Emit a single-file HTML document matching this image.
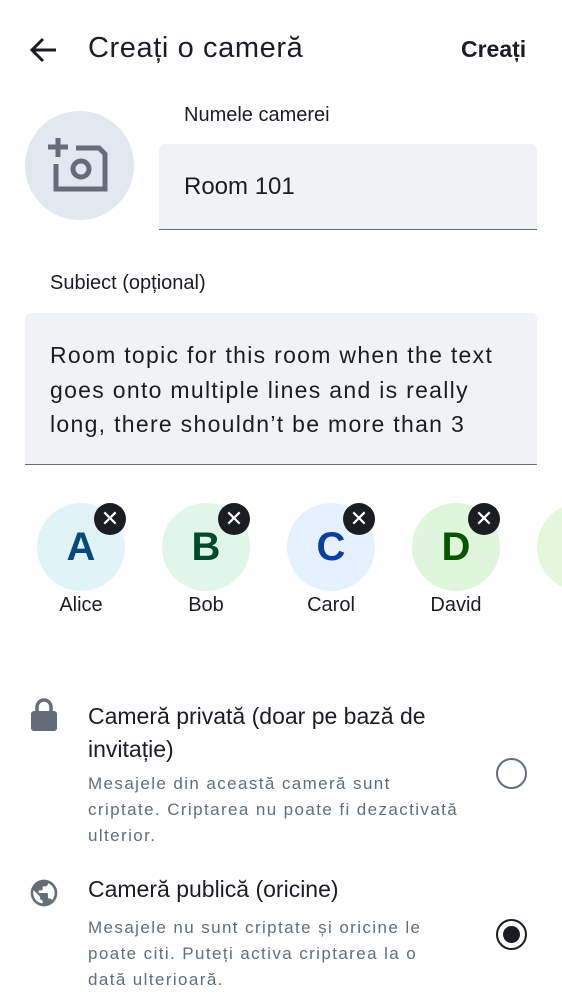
<!DOCTYPE html>
<html><head><meta charset="utf-8"><style>
*{margin:0;padding:0;box-sizing:border-box}
body{width:562px;height:1000px;background:#fff;font-family:"Liberation Sans",sans-serif;color:#1b1d22;position:relative;overflow:hidden}
.a{position:absolute}
.av{position:absolute;top:503px;width:88px;height:88px;border-radius:50%;font-weight:bold;font-size:40px;text-align:center;line-height:88px}
.x{position:absolute;top:503px;width:32px;height:32px;border-radius:50%;background:#1b1d22;color:#fff;text-align:center;line-height:32px;font-size:22px}
.nm{position:absolute;top:594px;width:120px;text-align:center;font-size:20px}
.d{position:absolute;left:88px;font-size:17px;line-height:26px;color:#656d77;letter-spacing:1.4px;white-space:nowrap}
</style></head><body>
<svg class="a" style="left:28px;top:36px" width="30" height="28" viewBox="0 0 30 28"><path d="M28 14H4M15 3L4 14l11 11" stroke="#1b1d22" stroke-width="3" fill="none"/></svg>
<div class="a" style="left:88px;top:32px;font-size:29px;letter-spacing:0.6px">Creați o cameră</div>
<div class="a" style="left:461px;top:36px;font-size:23px;font-weight:bold">Creați</div>
<div class="a" style="left:25px;top:111px;width:109px;height:109px;border-radius:50%;background:#e3e7ef"></div>
<svg class="a" style="left:46px;top:138px" width="62" height="56" viewBox="0 0 62 56"><g fill="none" stroke="#656d77" stroke-width="5"><path d="M12 0v19M2 9h20"/><path d="M10 26v25h49V16l-6-6H30"/><circle cx="35" cy="31" r="8"/></g></svg>
<div class="a" style="left:184px;top:104px;font-size:20px">Numele camerei</div>
<div class="a" style="left:159px;top:144px;width:378px;height:86px;background:#f0f2f5;border-radius:6px 6px 0 0;border-bottom:1.5px solid #656d77"></div>
<div class="a" style="left:184px;top:173px;font-size:24px">Room 101</div>
<div class="a" style="left:50px;top:272px;font-size:20px">Subiect (opțional)</div>
<div class="a" style="left:25px;top:313px;width:512px;height:152px;background:#f0f2f5;border-radius:6px 6px 0 0;border-bottom:1.5px solid #656d77"></div>
<div class="a" style="left:50px;top:338px;font-size:23px;line-height:34.5px;letter-spacing:1.3px;white-space:nowrap">Room topic for this room when the text<br>goes onto multiple lines and is really<br>long, there shouldn’t be more than 3</div>
<div class="av" style="left:37px;background:#e0f4f8;color:#0a4a7a">A</div>
<div class="av" style="left:162px;background:#e0f6eb;color:#004a2a">B</div>
<div class="av" style="left:287px;background:#e6f1ff;color:#0a3ea0">C</div>
<div class="av" style="left:412px;background:#e0f6dc;color:#085500">D</div>
<div class="av" style="left:537px;background:#e4f6dc"></div>
<div class="x" style="left:94px">✕</div>
<div class="x" style="left:218px">✕</div>
<div class="x" style="left:343px">✕</div>
<div class="x" style="left:468px">✕</div>
<div class="nm" style="left:21px">Alice</div>
<div class="nm" style="left:146px">Bob</div>
<div class="nm" style="left:271px">Carol</div>
<div class="nm" style="left:396px">David</div>
<svg class="a" style="left:30px;top:698px" width="28" height="34" viewBox="0 0 28 34"><path d="M7 13V9a7 7 0 0 1 14 0v4" stroke="#656d77" stroke-width="3.5" fill="none"/><rect x="1" y="13" width="26" height="20" rx="3" fill="#656d77"/></svg>
<div class="a" style="left:88px;top:700px;width:400px;font-size:23px;line-height:33px">Cameră privată (doar pe bază de invitație)</div>
<div class="d" style="top:771px">Mesajele din această cameră sunt<br>criptate. Criptarea nu poate fi dezactivată<br>ulterior.</div>
<div class="a" style="left:496px;top:758px;width:31px;height:31px;border-radius:50%;border:2.5px solid #656d77"></div>
<svg class="a" style="left:28px;top:877px" width="32" height="32" viewBox="0 0 24 24"><path fill="#656d77" d="M12 2a10 10 0 1 0 0 20 10 10 0 0 0 0-20zm-1 17.9A8 8 0 0 1 4.2 9.8L9 14.6v1a2 2 0 0 0 2 2zm6.9-2.5A2 2 0 0 0 16 16h-1v-3a1 1 0 0 0-1-1H8v-2h2a1 1 0 0 0 1-1V7h2a2 2 0 0 0 2-2v-.4a8 8 0 0 1 2.9 12.8z"/></svg>
<div class="a" style="left:88px;top:876px;font-size:23px">Cameră publică (oricine)</div>
<div class="d" style="top:915px">Mesajele nu sunt criptate și oricine le<br>poate citi. Puteți activa criptarea la o<br>dată ulterioară.</div>
<div class="a" style="left:496px;top:919px;width:31px;height:31px;border-radius:50%;border:2.5px solid #1b1d22"></div>
<div class="a" style="left:503px;top:926px;width:17px;height:17px;border-radius:50%;background:#1b1d22"></div>
</body></html>
